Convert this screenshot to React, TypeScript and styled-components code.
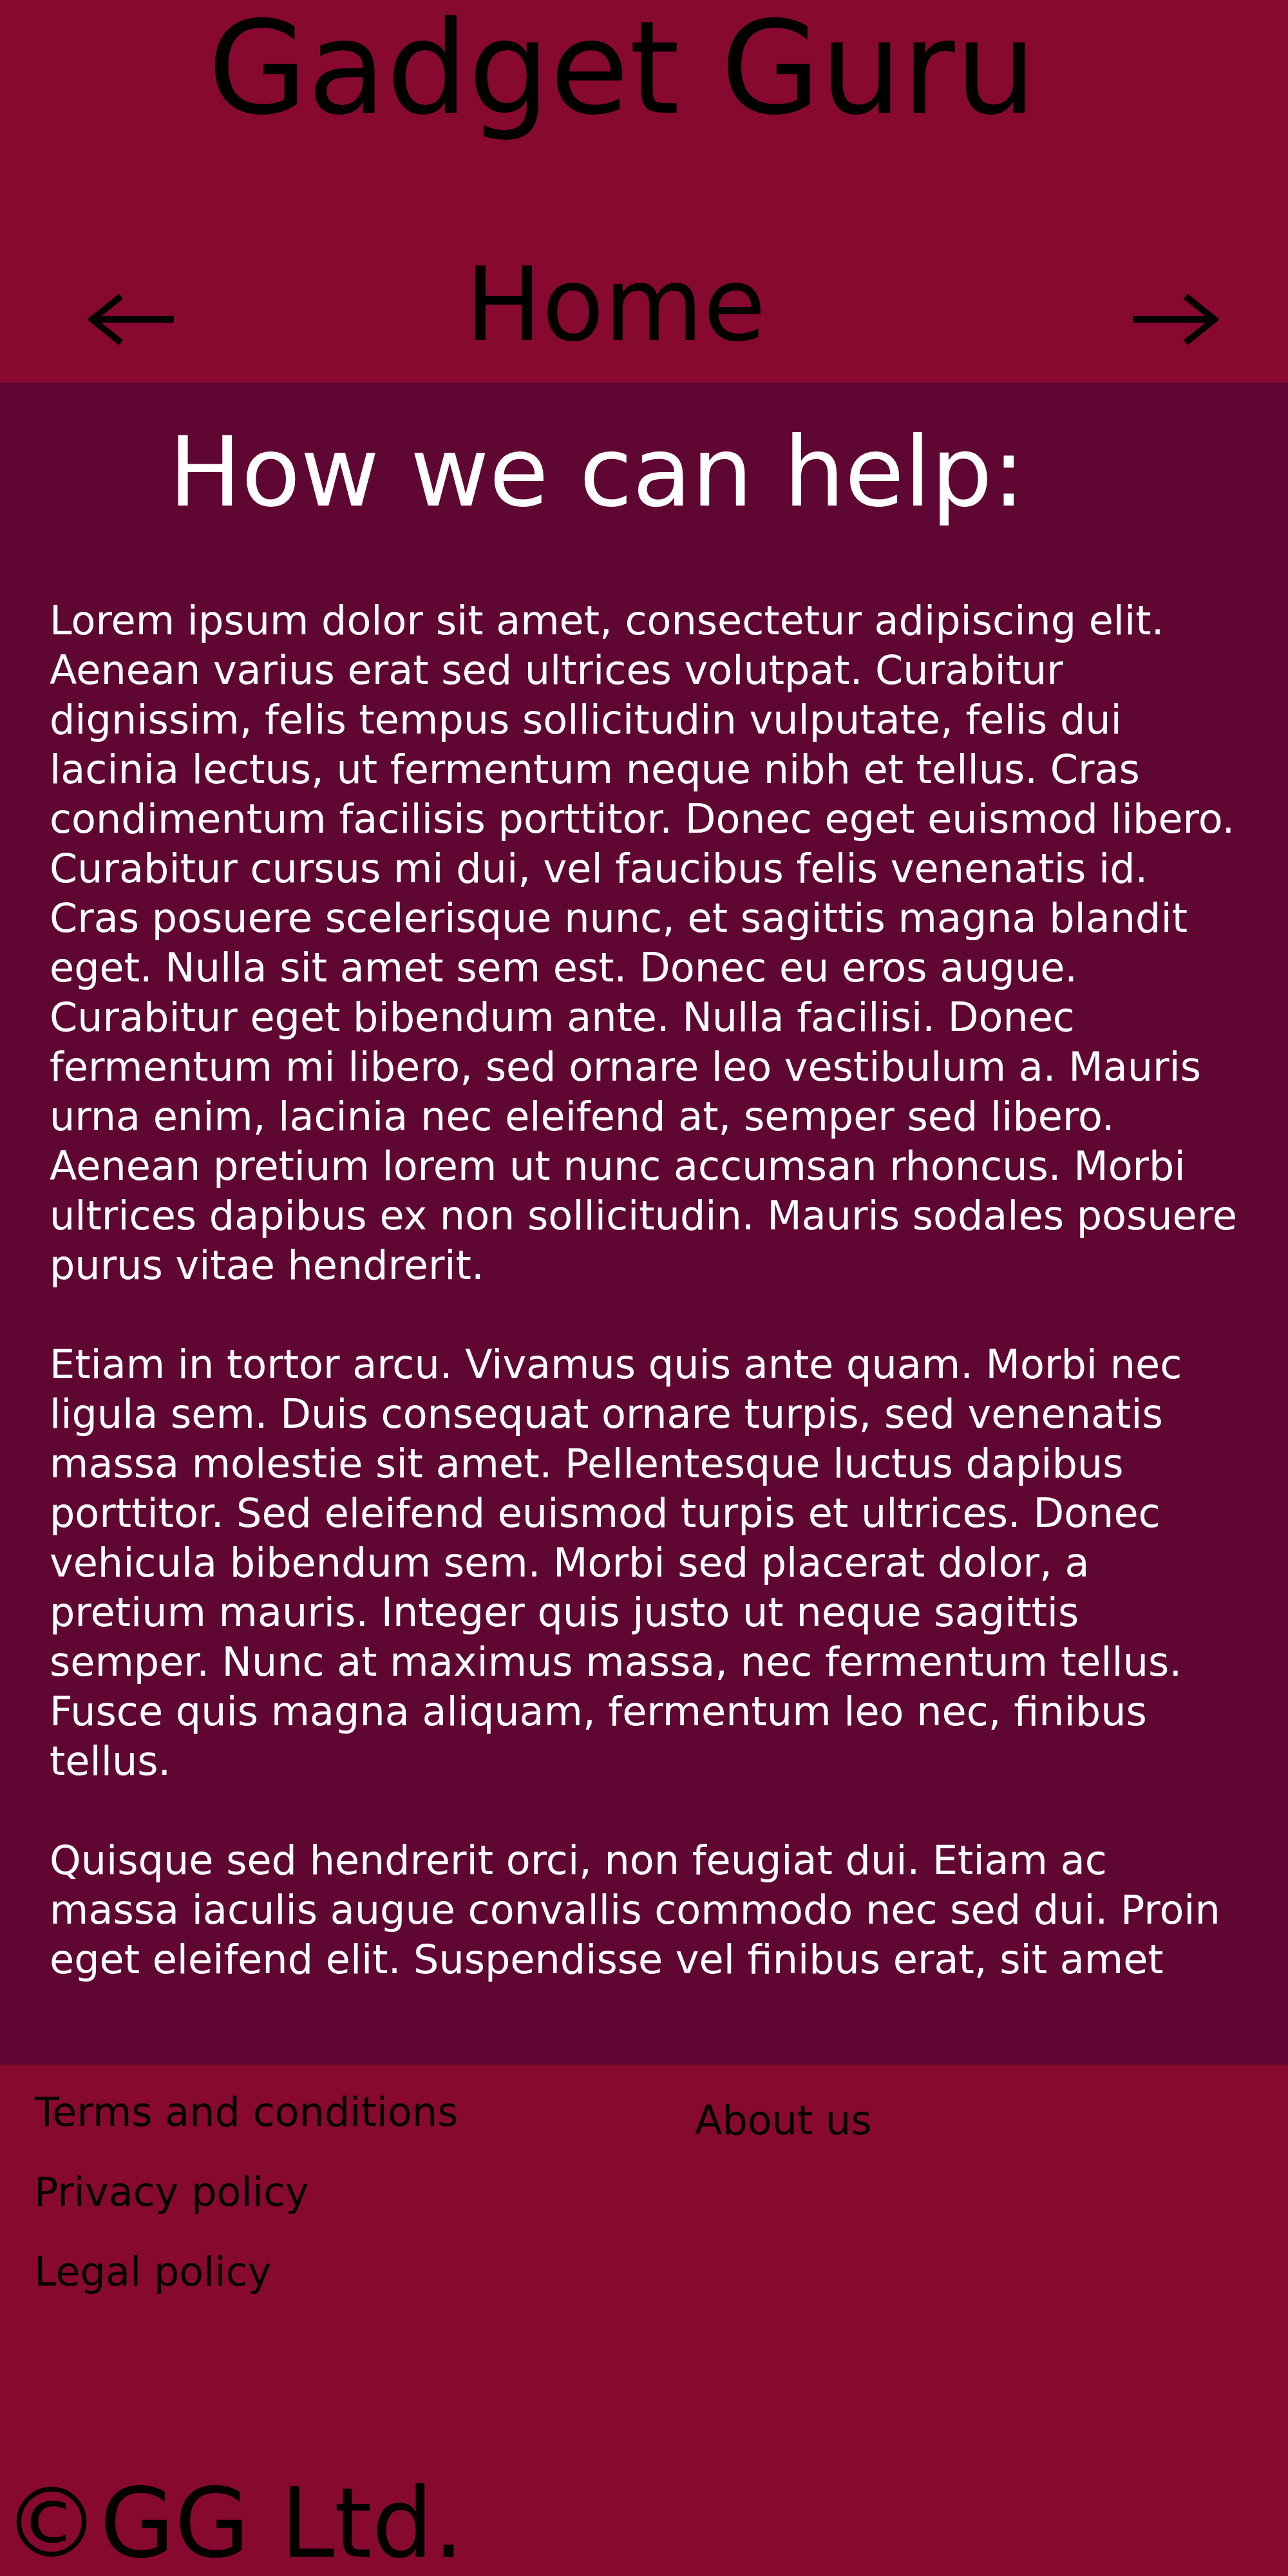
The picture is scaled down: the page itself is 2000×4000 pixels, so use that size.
import React from "react";
import styled, { createGlobalStyle } from "styled-components";

const GlobalStyle = createGlobalStyle`
  html, body {
    margin: 0;
    padding: 0;
    background: #5f0633;
  }
  body {
    font-family: "DejaVu Sans", Verdana, sans-serif;
  }
`;

const Page = styled.div`
  width: 2000px;
  display: flex;
  flex-direction: column;
`;

const Header = styled.header`
  background: #870930;
  padding-bottom: 28px;
`;

const SiteTitle = styled.h1`
  margin: 0;
  padding-right: 68px;
  font-size: 200px;
  font-weight: normal;
  line-height: 212px;
  text-align: center;
  color: #000;
`;

const Nav = styled.nav`
  display: flex;
  align-items: flex-start;
  margin-top: 168px;
  padding: 0 107px 0 136px;
`;

const ArrowButton = styled.a`
  display: block;
  width: 134px;
  height: 90px;
  margin-top: 71px;
  color: #000;
  svg {
    display: block;
  }
`;

const PageName = styled.h2`
  flex: 1;
  margin: 0;
  padding-right: 117px;
  font-size: 158px;
  font-weight: normal;
  line-height: 186px;
  text-align: center;
  color: #000;
`;

const Main = styled.main`
  background: #5f0633;
  color: #fff;
  padding: 52px 63px 125px 77px;
`;

const Heading = styled.h2`
  margin: 0 0 105px 185px;
  font-size: 150px;
  font-weight: normal;
  line-height: normal;
`;

const Para = styled.p`
  margin: 0;
  font-size: 62px;
  line-height: 77px;
  & + & {
    margin-top: 77px;
  }
`;

const Footer = styled.footer`
  background: #870930;
  color: #000;
  padding-top: 37px;
`;

const FooterColumns = styled.div`
  display: grid;
  grid-template-columns: 1026px 1fr;
  padding-left: 53px;
`;

const LinkList = styled.ul`
  list-style: none;
  margin: 0;
  padding: 0;
  display: flex;
  flex-direction: column;
  gap: 51px;
`;

const FooterLink = styled.li<{ $shift?: number }>`
  font-size: 62px;
  line-height: normal;
  margin-left: ${(p) => p.$shift ?? 0}px;
`;

const AboutLink = styled.div`
  font-size: 62px;
  line-height: normal;
  margin-top: 13px;
`;

const Copyright = styled.div`
  margin-top: 267px;
  padding-left: 5px;
  font-size: 150px;
  line-height: normal;
`;

const LeftArrow = () => (
  <svg width="134" height="90" viewBox="0 0 134 90">
    <path d="M134 45 H8" stroke="#000" strokeWidth="10" fill="none" />
    <path
      d="M52 9 L7 45 L52 81"
      stroke="#000"
      strokeWidth="10"
      fill="none"
      strokeLinejoin="miter"
    />
  </svg>
);

const RightArrow = () => (
  <svg width="134" height="90" viewBox="0 0 134 90">
    <path d="M0 45 H126" stroke="#000" strokeWidth="10" fill="none" />
    <path
      d="M82 9 L127 45 L82 81"
      stroke="#000"
      strokeWidth="10"
      fill="none"
      strokeLinejoin="miter"
    />
  </svg>
);

const paragraphs = [
  "Lorem ipsum dolor sit amet, consectetur adipiscing elit. Aenean varius erat sed ultrices volutpat. Curabitur dignissim, felis tempus sollicitudin vulputate, felis dui lacinia lectus, ut fermentum neque nibh et tellus. Cras condimentum facilisis porttitor. Donec eget euismod libero. Curabitur cursus mi dui, vel faucibus felis venenatis id. Cras posuere scelerisque nunc, et sagittis magna blandit eget. Nulla sit amet sem est. Donec eu eros augue. Curabitur eget bibendum ante. Nulla facilisi. Donec fermentum mi libero, sed ornare leo vestibulum a. Mauris urna enim, lacinia nec eleifend at, semper sed libero. Aenean pretium lorem ut nunc accumsan rhoncus. Morbi ultrices dapibus ex non sollicitudin. Mauris sodales posuere purus vitae hendrerit.",
  "Etiam in tortor arcu. Vivamus quis ante quam. Morbi nec ligula sem. Duis consequat ornare turpis, sed venenatis massa molestie sit amet. Pellentesque luctus dapibus porttitor. Sed eleifend euismod turpis et ultrices. Donec vehicula bibendum sem. Morbi sed placerat dolor, a pretium mauris. Integer quis justo ut neque sagittis semper. Nunc at maximus massa, nec fermentum tellus. Fusce quis magna aliquam, fermentum leo nec, finibus tellus.",
  "Quisque sed hendrerit orci, non feugiat dui. Etiam ac massa iaculis augue convallis commodo nec sed dui. Proin eget eleifend elit. Suspendisse vel finibus erat, sit amet",
];

export default function App() {
  return (
    <>
      <GlobalStyle />
      <Page>
        <Header>
          <SiteTitle>Gadget Guru</SiteTitle>
          <Nav>
            <ArrowButton aria-label="Previous">
              <LeftArrow />
            </ArrowButton>
            <PageName>Home</PageName>
            <ArrowButton aria-label="Next">
              <RightArrow />
            </ArrowButton>
          </Nav>
        </Header>
        <Main>
          <Heading>How we can help:</Heading>
          {paragraphs.map((t, i) => (
            <Para key={i}>{t}</Para>
          ))}
        </Main>
        <Footer>
          <FooterColumns>
            <LinkList>
              <FooterLink $shift={1}>Terms and conditions</FooterLink>
              <FooterLink>Privacy policy</FooterLink>
              <FooterLink>Legal policy</FooterLink>
            </LinkList>
            <AboutLink>About us</AboutLink>
          </FooterColumns>
          <Copyright>©GG Ltd.</Copyright>
        </Footer>
      </Page>
    </>
  );
}
